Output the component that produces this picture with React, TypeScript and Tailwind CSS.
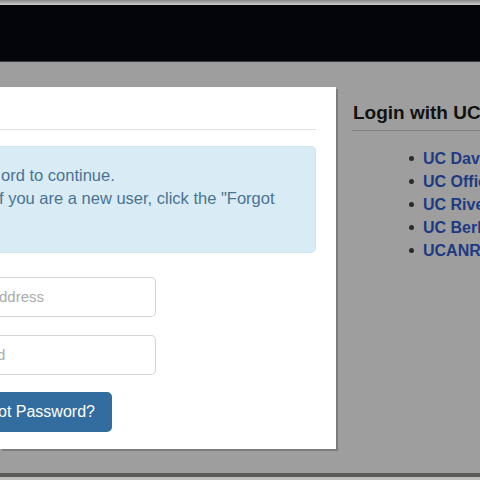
const UC_LINKS = ["UC Davis", "UC Office of the President", "UC Riverside", "UC Berkeley", "UCANR"];

export default function App() {
  return (
    <div className="w-[480px] h-[480px] overflow-hidden flex flex-col bg-[#9e9e9e] font-['Liberation_Sans',Arial,sans-serif]">
      {/* top bar */}
      <div className="h-[5px] bg-gradient-to-b from-[#8a8a8a] to-[#cfcfcf]" />
      <div className="h-[56px] bg-[#04040b]" />
      <div className="h-[1px] bg-[#3a3a3a]" />

      <div className="flex-1 flex overflow-hidden">
        {/* login card */}
        <div className="mt-[25px] w-[336px] h-[362px] bg-white shrink-0 shadow-[2px_2px_0_#7c7c7c] overflow-hidden">
          <div className="h-[43px] w-[316px] border-b border-[#e3e3e3]" />
          <div className="mt-[16px] w-[316px] h-[107px] bg-[#d9ebf5] rounded-r-[5px] border border-l-0 border-[#cfe6f1] pt-[17px] text-[16.5px] leading-[23px] text-[#4a7393] whitespace-nowrap">
            <p className="ml-[1px]">ord to continue.</p>
            <p className="-ml-[1px]">f you are a new user, click the "Forgot</p>
          </div>
          <div className="mt-[24px] flex flex-col gap-[18px]">
            <div className="w-[156px] h-[40px] border border-[#d3d3d3] rounded-r-[5px] border-l-0 flex items-center text-[15px] text-[#ababab] whitespace-nowrap -indent-[1px]">
              ddress
            </div>
            <div className="w-[156px] h-[40px] border border-[#d3d3d3] rounded-r-[5px] border-l-0 flex items-center text-[15px] text-[#ababab] whitespace-nowrap -indent-[3px]">
              d
            </div>
          </div>
          <div className="mt-[17px] w-[112px] h-[40px] bg-[#336d9f] rounded-r-[5px] flex items-center text-[16px] text-white whitespace-nowrap -indent-[2px]">
            ot Password?
          </div>
        </div>

        {/* right column */}
        <div className="ml-[16px] flex-1 pt-[39px] whitespace-nowrap">
          <h2 className="ml-[1px] text-[19px] leading-[24px] font-bold text-[#111] pb-[5px]">Login with UC</h2>
          <div className="h-[1px] bg-[#828282]" />
          <ul className="mt-[16px] pl-[57px] text-[16px] leading-[23px] font-bold text-[#1d3a82]">
            {UC_LINKS.map((name) => (
              <li key={name} className="flex items-center">
                <span className="w-[5px] h-[5px] rounded-full bg-[#2a2a2a] mr-[9px]" />
                {name}
              </li>
            ))}
          </ul>
        </div>
      </div>

      {/* bottom edge */}
      <div className="h-[4px] bg-[#5a5a56]" />
      <div className="h-[3px] bg-[#bdbdbd]" />
    </div>
  );
}
